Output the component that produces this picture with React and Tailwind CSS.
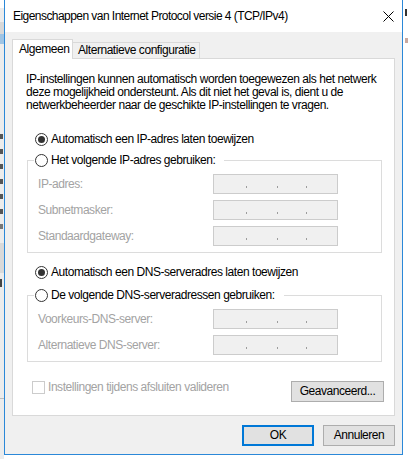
import React from "react";

const FONT = { fontFamily: '"Liberation Sans", Arial, sans-serif' };

function Radio({ checked }) {
  return (
    <span className="relative flex h-[13px] w-[13px] shrink-0 items-center justify-center rounded-full border border-[#333333] bg-white">
      {checked && <span className="h-[7px] w-[7px] rounded-full bg-[#333333]" />}
    </span>
  );
}

function IpBox() {
  return (
    <div className="flex h-[20px] w-[125px] items-end border border-[#cccccc] bg-[#f0f0f0] pb-[5px] pl-[32px]">
      <span className="h-[2px] w-[1px] bg-[#9c9c9c]" />
      <span className="ml-[30px] h-[2px] w-[1px] bg-[#9c9c9c]" />
      <span className="ml-[28px] h-[2px] w-[1px] bg-[#9c9c9c]" />
    </div>
  );
}

function Field({ label }) {
  return (
    <div className="flex h-[20px] items-center">
      <span className="w-[175px] text-[#a3a3a3]">{label}</span>
      <IpBox />
    </div>
  );
}

function Group({ legend, fields }) {
  return (
    <div className="relative ml-[1px] w-[355px] border border-[#dcdcdc] pb-[6px] pl-[10px] pt-[13px]">
      <div className="absolute left-[6px] top-[-7px] flex h-[13px] items-center gap-[3px] bg-white pl-[1px] pr-[9px]">
        <Radio />
        <span className="whitespace-nowrap">{legend}</span>
      </div>
      <div className="flex flex-col gap-[6px]">
        {fields.map((f) => (
          <Field key={f} label={f} />
        ))}
      </div>
    </div>
  );
}

function RadioRow({ label, checked }) {
  return (
    <div className="flex h-[13px] items-center gap-[3px] pl-[9px]">
      <Radio checked={checked} />
      <span className="whitespace-nowrap">{label}</span>
    </div>
  );
}

export default function App() {
  return (
    <div
      className="flex h-[459px] w-[408px] overflow-hidden bg-white text-[12px] leading-[13px] tracking-[-0.45px] text-black"
      style={FONT}
    >
      {/* background window sliver left */}
      <div className="flex w-[4px] shrink-0 flex-col bg-[#ececec]">
        <div className="h-[8px] bg-white" />
        <div className="mt-[14px] h-[12px] bg-[#d8d8d8]" />
        <div className="h-[10px] bg-[#9fc4e4]" />
        <div className="mt-[90px] flex flex-col gap-[10px]">
          <div className="h-[5px] w-[3px] bg-[#555]" />
          <div className="h-[5px] w-[3px] bg-[#555]" />
          <div className="h-[5px] w-[3px] bg-[#555]" />
          <div className="h-[5px] w-[3px] bg-[#555]" />
          <div className="h-[5px] w-[3px] bg-[#555]" />
          <div className="h-[5px] w-[3px] bg-[#555]" />
          <div className="h-[5px] w-[3px] bg-[#777]" />
        </div>
        <div className="mt-[14px] h-[30px] bg-[#d9d9d9]" />
        <div className="mt-[6px] h-[8px] w-[2px] bg-[#444]" />
        <div className="flex-1" />
        <div className="mb-[60px] h-[1px] bg-[#bdbdbd]" />
      </div>

      {/* dialog */}
      <div className="flex h-[455px] w-[399px] shrink-0 flex-col border-x border-b border-[#2b88d8]">
        <div className="flex h-[32px] items-center justify-between bg-white pl-[8px] pr-[8px]">
          <span className="whitespace-nowrap tracking-[-0.55px]">Eigenschappen van Internet Protocol versie 4 (TCP/IPv4)</span>
          <svg width="11" height="11" viewBox="0 0 11 11">
            <path d="M0.5 0.5 L10.5 10.5 M10.5 0.5 L0.5 10.5" stroke="#000" strokeWidth="1" fill="none" />
          </svg>
        </div>

        <div className="flex flex-1 flex-col bg-[#f0f0f0] px-[7px] pb-[8px] pt-[7px]">
          {/* tabs */}
          <div className="flex h-[19px] items-start">
            <div className="relative z-10 flex h-[20px] w-[61px] items-center border-x border-t border-[#d9d9d9] bg-white pl-[6px]">
              Algemeen
            </div>
            <div className="mt-[3px] flex h-[16px] w-[127px] items-center border-r border-t border-[#d9d9d9] bg-[#f0f0f0] pl-[5px]">
              <span className="whitespace-nowrap">Alternatieve configuratie</span>
            </div>
          </div>

          {/* panel */}
          <div className="flex h-[358px] w-[383px] flex-col border border-[#d9d9d9] bg-white px-[13px]">
            <p className="mt-[14px] whitespace-nowrap">
              IP-instellingen kunnen automatisch worden toegewezen als het netwerk
              <br />
              deze mogelijkheid ondersteunt. Als dit niet het geval is, dient u de
              <br />
              netwerkbeheerder naar de geschikte IP-instellingen te vragen.
            </p>

            <div className="mt-[21px]">
              <RadioRow checked label="Automatisch een IP-adres laten toewijzen" />
            </div>

            <div className="mt-[14px]">
              <Group
                legend="Het volgende IP-adres gebruiken:"
                fields={["IP-adres:", "Subnetmasker:", "Standaardgateway:"]}
              />
            </div>

            <div className="mt-[13px]">
              <RadioRow checked label="Automatisch een DNS-serveradres laten toewijzen" />
            </div>

            <div className="mt-[16px]">
              <Group
                legend="De volgende DNS-serveradressen gebruiken:"
                fields={["Voorkeurs-DNS-server:", "Alternatieve DNS-server:"]}
              />
            </div>

            <div className="mt-[19px] flex items-start justify-between">
              <div className="flex h-[13px] items-center gap-[3px] pl-[6px]">
                <span className="h-[13px] w-[13px] border border-[#cccccc] bg-white" />
                <span className="whitespace-nowrap text-[#a3a3a3]">Instellingen tijdens afsluiten valideren</span>
              </div>
              <button className="mr-[-3px] flex h-[21px] w-[93px] items-center justify-center border border-[#adadad] bg-[#e1e1e1]">
                Geavanceerd...
              </button>
            </div>
          </div>

          {/* buttons */}
          <div className="mt-[9px] flex justify-end gap-[9px]">
            <button className="flex h-[21px] w-[72px] items-center justify-center border-2 border-[#0078d7] bg-[#e1e1e1]">
              OK
            </button>
            <button className="flex h-[21px] w-[72px] items-center justify-center border border-[#adadad] bg-[#e1e1e1]">
              Annuleren
            </button>
          </div>
        </div>
      </div>

      {/* background window sliver right */}
      <div className="flex w-[5px] shrink-0 flex-col bg-white">
        <div className="ml-[2px] mt-[9px] h-[7px] w-[2px] bg-[#333]" />
        <div className="ml-[2px] mt-[22px] h-[5px] w-[3px] bg-[#c9a9a0]" />
      </div>
    </div>
  );
}
